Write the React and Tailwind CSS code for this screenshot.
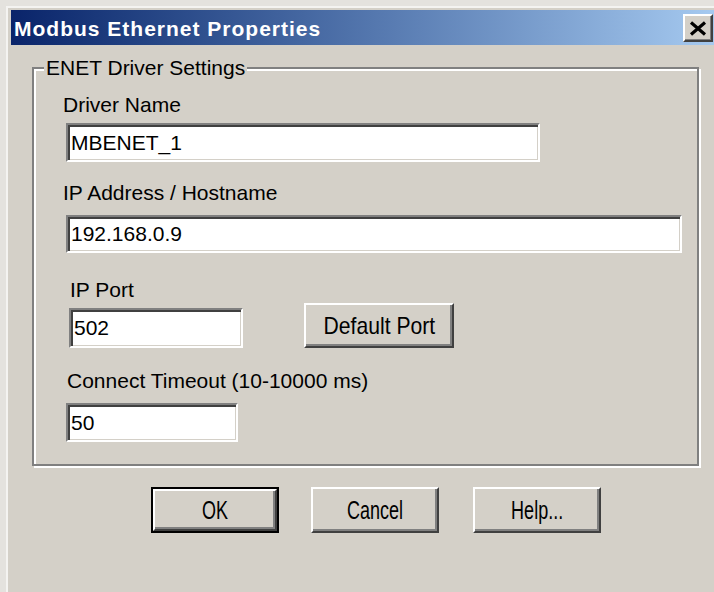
import React from "react";

// Sunken white edit field with the classic two-tone bevel.
function Field({ value, className = "" }) {
  return (
    <div
      className={`flex items-center bg-white border-2 border-t-[#808080] border-l-[#808080] border-b-white border-r-white shadow-[inset_2px_2px_0_#404040,inset_-1px_-1px_0_#d4d0c8] pl-[3px] text-[21px] leading-[24px] text-black whitespace-nowrap overflow-hidden ${className}`}
    >
      {value}
    </div>
  );
}

// Raised push button; the default button gets a black frame around it.
function PushButton({ label, className = "", textClass = "", isDefault = false }) {
  const face = (
    <div
      className={`flex items-center justify-center w-full h-full bg-[#d4d0c8] border-2 border-t-white border-l-white border-b-[#404040] border-r-[#404040] shadow-[inset_-2px_-2px_0_#808080] text-black`}
    >
      <span className={`inline-block whitespace-nowrap ${textClass}`}>{label}</span>
    </div>
  );
  if (isDefault) {
    return <div className={`border-2 border-black ${className}`}>{face}</div>;
  }
  return <div className={className}>{face}</div>;
}

function Label({ children, className = "" }) {
  return (
    <div className={`text-[21px] leading-[24px] h-[24px] text-black whitespace-nowrap ${className}`}>
      {children}
    </div>
  );
}

export default function App() {
  return (
    <div className="w-[714px] h-[592px] overflow-hidden bg-[#e4e2de] pl-[6px] pt-[6px] font-['Liberation_Sans',Arial,sans-serif]">
      <div className="w-[710px] h-[600px] bg-[#d4d0c8] border-l-2 border-t-2 border-[#f4f3f1] pl-[3px] pt-[2px]">
        {/* Title bar */}
        <div className="h-[35px] bg-linear-to-r from-[#0a246a] to-[#a6caf0] flex justify-between items-start pl-[3px]">
          <span className="mt-[7px] text-white font-bold text-[21px] leading-[24px] tracking-[1px] whitespace-nowrap">
            Modbus Ethernet Properties
          </span>
          <div className="mt-[4px] mr-[3px] w-[30px] h-[28px] bg-[#d4d0c8] border-2 border-t-white border-l-white border-b-[#404040] border-r-[#404040] shadow-[inset_-1px_-1px_0_#808080] flex items-center justify-center">
            <svg width="18" height="15" viewBox="0 0 18 15">
              <path d="M2 1.5 L16 13.5 M16 1.5 L2 13.5" stroke="#000" strokeWidth="3.2" fill="none" />
            </svg>
          </div>
        </div>

        {/* Dialog body */}
        <div className="pl-[21px] pt-[22px]">
          {/* ENET Driver Settings group */}
          <div className="relative w-[667px] h-[399px] border-2 border-[#808080] shadow-[inset_2px_2px_0_#fff,2px_2px_0_#fff]">
            <div className="absolute left-[10px] top-[-13px] px-[2px] bg-[#d4d0c8] text-[21px] leading-[24px] text-black whitespace-nowrap">
              ENET Driver Settings
            </div>

            <div className="flex flex-col items-start pl-[29px] pt-[24px]">
              <Label>Driver Name</Label>
              <Field value="MBENET_1" className="mt-[6px] ml-[3px] w-[474px] h-[39px]" />

              <Label className="mt-[19px]">IP Address / Hostname</Label>
              <Field value="192.168.0.9" className="mt-[10px] ml-[3px] w-[616px] h-[38px]" />

              <div className="flex items-end mt-[25px]">
                <div className="flex flex-col items-start">
                  <Label className="ml-[7px]">IP Port</Label>
                  <Field value="502" className="mt-[6px] ml-[6px] w-[174px] h-[40px]" />
                </div>
                <PushButton
                  label="Default Port"
                  className="ml-[61px] w-[150px] h-[45px]"
                  textClass="text-[24px] leading-[28px] scale-x-[0.88]"
                />
              </div>

              <Label className="mt-[21px] ml-[4px]">Connect Timeout (10-10000 ms)</Label>
              <Field value="50" className="mt-[10px] ml-[3px] w-[172px] h-[39px]" />
            </div>
          </div>

          {/* Dialog buttons */}
          <div className="flex mt-[21px] ml-[119px]">
            <PushButton
              isDefault
              label="OK"
              className="w-[128px] h-[46px]"
              textClass="text-[25px] leading-[28px] scale-x-[0.72]"
            />
            <PushButton
              label="Cancel"
              className="ml-[32px] w-[128px] h-[46px]"
              textClass="text-[25px] leading-[28px] scale-x-[0.72]"
            />
            <PushButton
              label="Help..."
              className="ml-[34px] w-[128px] h-[46px]"
              textClass="text-[25px] leading-[28px] scale-x-[0.72]"
            />
          </div>
        </div>
      </div>
    </div>
  );
}
